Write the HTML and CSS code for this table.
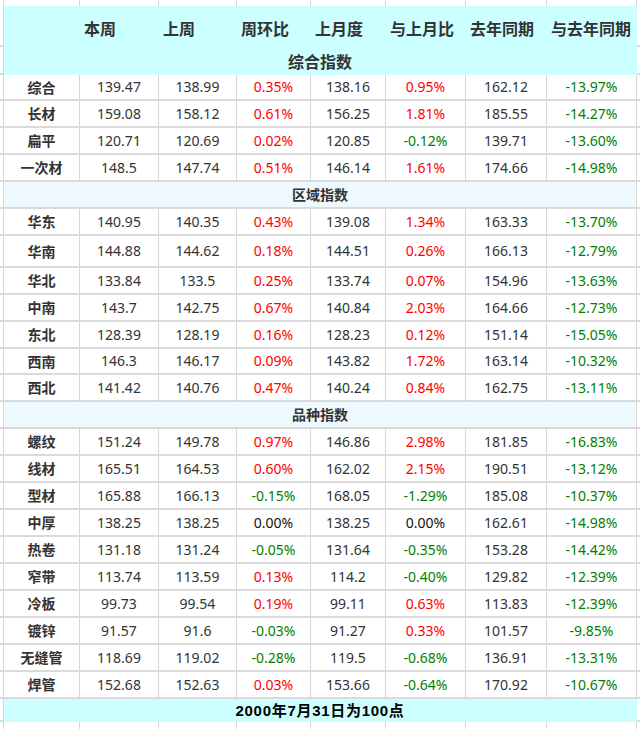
FILE: index.html
```html
<!DOCTYPE html>
<html lang="zh-CN">
<head>
<meta charset="utf-8">
<title>钢材价格指数</title>
<link rel="stylesheet" href="styles.css">
</head>
<body>
<table class="sheet">
  <colgroup>
    <col class="c-m0"><col class="c-1"><col class="c-2"><col class="c-3"><col class="c-4"><col class="c-5"><col class="c-6"><col class="c-7"><col class="c-8"><col class="c-m9">
  </colgroup>
  <tr class="gap"><td class="m"></td><td></td><td></td><td></td><td></td><td></td><td></td><td></td><td></td><td class="mr"></td></tr>
  <tr class="head1">
    <td class="m"></td>
    <td class="h"></td><td class="h">本周</td><td class="h">上周</td><td class="h">周环比</td><td class="h">上月度</td><td class="h">与上月比</td><td class="h">去年同期</td><td class="h">与去年同期</td>
    <td class="mr"></td>
  </tr>
  <tr class="head2"><td class="m"></td><td class="title" colspan="8">综合指数</td><td class="mr"></td></tr>
  <tr class="short"><td class="m"></td><td class="n">综合</td><td>139.47</td><td>138.99</td><td class="up">0.35%</td><td>138.16</td><td class="up">0.95%</td><td>162.12</td><td class="dn">-13.97%</td><td class="mr"></td></tr>
  <tr><td class="m"></td><td class="n">长材</td><td>159.08</td><td>158.12</td><td class="up">0.61%</td><td>156.25</td><td class="up">1.81%</td><td>185.55</td><td class="dn">-14.27%</td><td class="mr"></td></tr>
  <tr><td class="m"></td><td class="n">扁平</td><td>120.71</td><td>120.69</td><td class="up">0.02%</td><td>120.85</td><td class="dn">-0.12%</td><td>139.71</td><td class="dn">-13.60%</td><td class="mr"></td></tr>
  <tr><td class="m"></td><td class="n">一次材</td><td>148.5</td><td>147.74</td><td class="up">0.51%</td><td>146.14</td><td class="up">1.61%</td><td>174.66</td><td class="dn">-14.98%</td><td class="mr"></td></tr>
  <tr class="sec"><td class="m"></td><td class="s" colspan="8">区域指数</td><td class="mr"></td></tr>
  <tr><td class="m"></td><td class="n">华东</td><td>140.95</td><td>140.35</td><td class="up">0.43%</td><td>139.08</td><td class="up">1.34%</td><td>163.33</td><td class="dn">-13.70%</td><td class="mr"></td></tr>
  <tr class="tall"><td class="m"></td><td class="n">华南</td><td>144.88</td><td>144.62</td><td class="up">0.18%</td><td>144.51</td><td class="up">0.26%</td><td>166.13</td><td class="dn">-12.79%</td><td class="mr"></td></tr>
  <tr><td class="m"></td><td class="n">华北</td><td>133.84</td><td>133.5</td><td class="up">0.25%</td><td>133.74</td><td class="up">0.07%</td><td>154.96</td><td class="dn">-13.63%</td><td class="mr"></td></tr>
  <tr><td class="m"></td><td class="n">中南</td><td>143.7</td><td>142.75</td><td class="up">0.67%</td><td>140.84</td><td class="up">2.03%</td><td>164.66</td><td class="dn">-12.73%</td><td class="mr"></td></tr>
  <tr><td class="m"></td><td class="n">东北</td><td>128.39</td><td>128.19</td><td class="up">0.16%</td><td>128.23</td><td class="up">0.12%</td><td>151.14</td><td class="dn">-15.05%</td><td class="mr"></td></tr>
  <tr class="short"><td class="m"></td><td class="n">西南</td><td>146.3</td><td>146.17</td><td class="up">0.09%</td><td>143.82</td><td class="up">1.72%</td><td>163.14</td><td class="dn">-10.32%</td><td class="mr"></td></tr>
  <tr><td class="m"></td><td class="n">西北</td><td>141.42</td><td>140.76</td><td class="up">0.47%</td><td>140.24</td><td class="up">0.84%</td><td>162.75</td><td class="dn">-13.11%</td><td class="mr"></td></tr>
  <tr class="sec"><td class="m"></td><td class="s" colspan="8">品种指数</td><td class="mr"></td></tr>
  <tr><td class="m"></td><td class="n">螺纹</td><td>151.24</td><td>149.78</td><td class="up">0.97%</td><td>146.86</td><td class="up">2.98%</td><td>181.85</td><td class="dn">-16.83%</td><td class="mr"></td></tr>
  <tr><td class="m"></td><td class="n">线材</td><td>165.51</td><td>164.53</td><td class="up">0.60%</td><td>162.02</td><td class="up">2.15%</td><td>190.51</td><td class="dn">-13.12%</td><td class="mr"></td></tr>
  <tr><td class="m"></td><td class="n">型材</td><td>165.88</td><td>166.13</td><td class="dn">-0.15%</td><td>168.05</td><td class="dn">-1.29%</td><td>185.08</td><td class="dn">-10.37%</td><td class="mr"></td></tr>
  <tr><td class="m"></td><td class="n">中厚</td><td>138.25</td><td>138.25</td><td class="zero">0.00%</td><td>138.25</td><td class="zero">0.00%</td><td>162.61</td><td class="dn">-14.98%</td><td class="mr"></td></tr>
  <tr><td class="m"></td><td class="n">热卷</td><td>131.18</td><td>131.24</td><td class="dn">-0.05%</td><td>131.64</td><td class="dn">-0.35%</td><td>153.28</td><td class="dn">-14.42%</td><td class="mr"></td></tr>
  <tr><td class="m"></td><td class="n">窄带</td><td>113.74</td><td>113.59</td><td class="up">0.13%</td><td>114.2</td><td class="dn">-0.40%</td><td>129.82</td><td class="dn">-12.39%</td><td class="mr"></td></tr>
  <tr><td class="m"></td><td class="n">冷板</td><td>99.73</td><td>99.54</td><td class="up">0.19%</td><td>99.11</td><td class="up">0.63%</td><td>113.83</td><td class="dn">-12.39%</td><td class="mr"></td></tr>
  <tr><td class="m"></td><td class="n">镀锌</td><td>91.57</td><td>91.6</td><td class="dn">-0.03%</td><td>91.27</td><td class="up">0.33%</td><td>101.57</td><td class="dn">-9.85%</td><td class="mr"></td></tr>
  <tr><td class="m"></td><td class="n">无缝管</td><td>118.69</td><td>119.02</td><td class="dn">-0.28%</td><td>119.5</td><td class="dn">-0.68%</td><td>136.91</td><td class="dn">-13.31%</td><td class="mr"></td></tr>
  <tr><td class="m"></td><td class="n">焊管</td><td>152.68</td><td>152.63</td><td class="up">0.03%</td><td>153.66</td><td class="dn">-0.64%</td><td>170.92</td><td class="dn">-10.67%</td><td class="mr"></td></tr>
  <tr class="foot"><td class="m"></td><td class="f" colspan="8">2000年7月31日为100点</td><td class="mr"></td></tr>
  <tr class="gap bottom"><td class="m"></td><td></td><td></td><td></td><td></td><td></td><td></td><td></td><td></td><td class="mr"></td></tr>
</table>
</body>
</html>
```
FILE: styles.css
```css
html, body {
  margin: 0;
  padding: 0;
  background: #ffffff;
}

.sheet {
  width: 640px;
  table-layout: fixed;
  border-collapse: separate;
  border-spacing: 0;
  font-family: "Noto Sans", "Noto Sans CJK SC", sans-serif;
  font-size: 14px;
  color: #333333;
}

.c-m0 { width: 4px; }
.c-1 { width: 76px; }
.c-2 { width: 79px; }
.c-3 { width: 78px; }
.c-4 { width: 74px; }
.c-5 { width: 75px; }
.c-6 { width: 80px; }
.c-7 { width: 81px; }
.c-8 { width: 90px; }
.c-m9 { width: 3px; }

.sheet td {
  padding: 0;
  text-align: center;
  vertical-align: middle;
  white-space: nowrap;
  overflow: hidden;
  line-height: 25px;
  border-right: 1px solid #d6d6d6;
  border-bottom: 2px solid #dadada;
}

.sheet td.mr {
  border-right: 0;
}

/* spacing rows above and below the sheet */
.sheet .gap td {
  height: 6px;
  line-height: 0;
  font-size: 0;
  border-bottom: 0;
}
.sheet .gap.bottom td {
  height: 7px;
}

.sheet .short td { line-height: 24px; }
.sheet .tall td { line-height: 30px; }

/* header */
.sheet td.h {
  background: #ccffff;
  border-right-color: #ccffff;
  border-bottom: 0;
  text-align: left;
  padding: 3px 0 0 4px;
  line-height: 38px;
  font-family: "Noto Sans CJK SC", sans-serif;
  font-size: 16px;
  font-weight: 700;
  color: #333333;
}
.sheet .head1 td.m,
.sheet .head1 td.mr { line-height: 39px; }

.sheet td.title {
  background: #ccffff;
  border-right-color: #ccffff;
  border-bottom: 0;
  line-height: 28px;
  font-family: "Noto Sans CJK SC", sans-serif;
  font-size: 16px;
  font-weight: 700;
  color: #333333;
}
.sheet .head2 td.m,
.sheet .head2 td.mr { line-height: 26px; }

/* section rows */
.sheet td.s {
  background: #eef8ff;
  font-family: "Noto Sans CJK SC", sans-serif;
  font-size: 14px;
  font-weight: 700;
  color: #333333;
}

/* row names */
.sheet td.n {
  font-family: "Noto Sans CJK SC", sans-serif;
  font-weight: 700;
  font-size: 14px;
  color: #333333;
}

.sheet td.up { color: #ff0000; }
.sheet td.dn { color: #008000; }
.sheet td.zero { color: #111111; }

/* footer */
.sheet td.f {
  background: #ccffff;
  border-right-color: #ccffff;
  border-bottom: 0;
  line-height: 23px;
  font-family: "Liberation Sans", "Noto Sans CJK SC", sans-serif;
  font-size: 15px;
  font-weight: 700;
  letter-spacing: 0.7px;
  color: #000000;
}
.sheet .foot td.m,
.sheet .foot td.mr { line-height: 21px; }
```
